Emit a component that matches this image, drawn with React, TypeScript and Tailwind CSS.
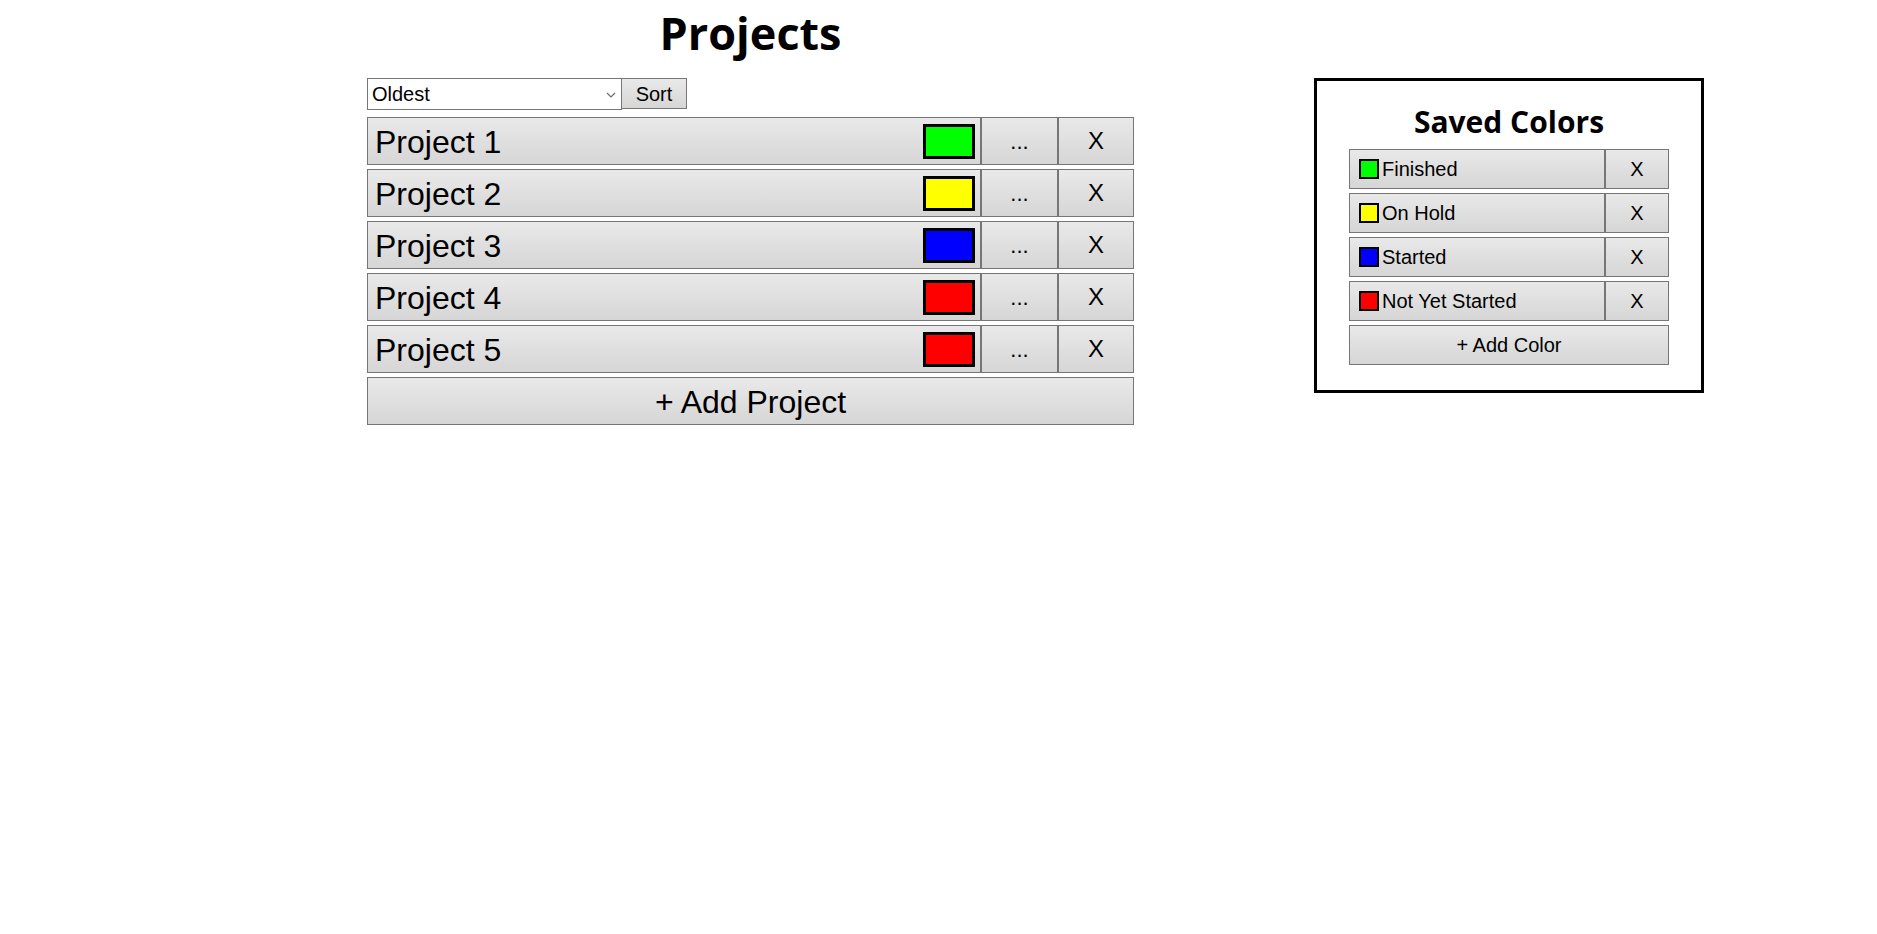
import React from "react";

const projects = [
  { name: "Project 1", color: "#00ff00" },
  { name: "Project 2", color: "#ffff00" },
  { name: "Project 3", color: "#0000ff" },
  { name: "Project 4", color: "#ff0000" },
  { name: "Project 5", color: "#ff0000" },
];

const saved = [
  { name: "Finished", color: "#00ff00" },
  { name: "On Hold", color: "#ffff00" },
  { name: "Started", color: "#0000ff" },
  { name: "Not Yet Started", color: "#ff0000" },
];

const btn =
  "border border-[#767676] bg-gradient-to-b from-[#e9e9e9] to-[#d6d6d6] text-black";

export default function App() {
  return (
    <div
      className="flex items-start min-h-[934px] bg-white text-black"
      style={{ fontFamily: '"Liberation Sans", Arial, sans-serif' }}
    >
      <div className="ml-[367px] w-[767px] flex flex-col">
        <h1
          className="mt-[3px] h-[60px] leading-[60px] text-[45px] font-bold text-center mb-[15px]"
          style={{ fontFamily: '"Open Sans", sans-serif' }}
        >
          Projects
        </h1>
        <div className="flex h-[32px] mb-[7px]">
          <div className="relative w-[255px] h-[32px] border border-[#767676] bg-white flex items-center pl-[4px] text-[20px]">
            Oldest
            <svg
              className="absolute right-[5px] top-[13px]"
              width="10"
              height="6"
              viewBox="0 0 10 6"
            >
              <path d="M1 1 L5 5 L9 1" fill="none" stroke="#6b6b6b" strokeWidth="1.2" />
            </svg>
          </div>
          <button className={`${btn} w-[66px] h-[31px] -ml-px text-[20px] leading-none`}>
            Sort
          </button>
        </div>
        <div className="flex flex-col gap-[4px]">
          {projects.map((p) => (
            <div key={p.name} className="flex h-[48px]">
              <button
                className={`${btn} flex-1 flex items-center justify-between pl-[7px] pr-[5px] text-[32px]`}
              >
                <span className="translate-y-[1px]">{p.name}</span>
                <span
                  className="w-[52px] h-[35px] border-[3px] border-black"
                  style={{ backgroundColor: p.color }}
                />
              </button>
              <button className={`${btn} w-[77px] text-[22px]`}>...</button>
              <button className={`${btn} w-[76px] text-[24px]`}>X</button>
            </div>
          ))}
          <button className={`${btn} h-[48px] text-[32px]`}>+ Add Project</button>
        </div>
      </div>

      <div className="ml-[180px] mt-[78px] w-[390px] border-[3px] border-black px-[32px] pt-[23px] pb-[25px]">
        <h2
          className="h-[36px] leading-[36px] text-[30px] font-bold text-center mb-[9px]"
          style={{ fontFamily: '"Open Sans", sans-serif' }}
        >
          Saved Colors
        </h2>
        <div className="flex flex-col gap-[4px]">
          {saved.map((c) => (
            <div key={c.name} className="flex h-[40px]">
              <button
                className={`${btn} w-[256px] flex items-center pl-[9px] text-[20px]`}
              >
                <span
                  className="w-[20px] h-[20px] border-2 border-black mr-[3px]"
                  style={{ backgroundColor: c.color }}
                />
                <span>{c.name}</span>
              </button>
              <button className={`${btn} w-[64px] text-[20px]`}>X</button>
            </div>
          ))}
          <button className={`${btn} h-[40px] text-[20px]`}>+ Add Color</button>
        </div>
      </div>
    </div>
  );
}
